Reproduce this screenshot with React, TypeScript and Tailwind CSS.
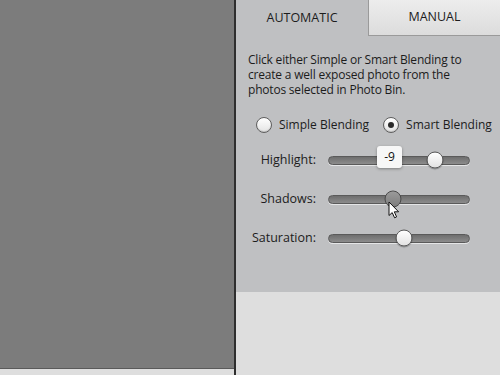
import React from "react";

const font = { fontFamily: '"Open Sans", "Liberation Sans", sans-serif' };

const Radio = ({ checked, label }: { checked?: boolean; label: string }) => (
  <label className="flex items-center gap-[7px]">
    <span className="w-[16px] h-[16px] rounded-full border border-[#5e5e5e] bg-gradient-to-b from-[#ffffff] to-[#e4e4e4] flex items-center justify-center shadow-[inset_0_-1px_1px_rgba(0,0,0,0.15)]">
      {checked && <span className="w-[6px] h-[6px] rounded-full bg-[#2a2a2a]" />}
    </span>
    <span className="text-[12px] text-[#1c1c1c] leading-none">{label}</span>
  </label>
);

const Slider = ({
  label,
  pos,
  pressed,
  tip,
}: {
  label: string;
  pos: number;
  pressed?: boolean;
  tip?: string;
}) => (
  <div className="flex items-center h-[20px]">
    <span className="w-[80px] text-right text-[12.5px] text-[#1c1c1c] leading-none">{label}</span>
    <div className="relative ml-[12px] w-[142px] h-[9px] rounded-full border border-[#5a5a5a] bg-gradient-to-b from-[#6e6e6e] to-[#8c8c8c] shadow-[0_1px_0_rgba(255,255,255,0.6)]">
      {tip && (
        <div
          className="absolute top-[-11px] w-[25px] h-[22px] rounded-[3px] bg-[#f7f7f7] shadow-[0_1px_3px_rgba(0,0,0,0.35)] flex items-center justify-center text-[12px] text-[#111] z-10"
          style={{ left: 48 }}
        >
          {tip}
        </div>
      )}
      <div
        className={
          pressed
            ? "absolute top-1/2 -translate-y-1/2 -translate-x-1/2 w-[17px] h-[17px] rounded-full border border-[#4a4a4a] bg-gradient-to-b from-[#9a9a9a] to-[#7e7e7e]"
            : "absolute top-1/2 -translate-y-1/2 -translate-x-1/2 w-[17px] h-[17px] rounded-full border border-[#5a5a5a] bg-gradient-to-b from-[#ffffff] to-[#e2e2e2] shadow-[0_1px_1px_rgba(0,0,0,0.3)]"
        }
        style={{ left: pos }}
      />
    </div>
  </div>
);

export default function App() {
  return (
    <div className="w-[500px] h-[375px] flex overflow-hidden" style={font}>
      {/* Preview area */}
      <div className="w-[234px] h-full flex flex-col">
        <div className="h-[369px] bg-[#7c7c7c] border-b border-[#5a5a5a]" />
        <div className="flex-1 bg-[#dedede]" />
      </div>
      <div className="w-[2px] h-full bg-[#2e2e2e]" />

      {/* Panel */}
      <div className="flex-1 flex flex-col">
        <div className="h-[292px] bg-[#bfc0c2] relative">
          <div className="flex h-[36px]">
            <div className="w-[132px] flex items-center justify-center text-[12.5px] text-[#1c1c1c]">
              AUTOMATIC
            </div>
            <div className="flex-1 flex items-center justify-center text-[12.5px] text-[#1c1c1c] bg-gradient-to-b from-[#ededed] to-[#dcdcdc] border-l border-b border-[#9a9a9a]">
              MANUAL
            </div>
          </div>

          <p className="mt-[16px] px-[12px] text-[12px] leading-[15px] tracking-[-0.2px] text-[#1c1c1c]">
            Click either Simple or Smart Blending to create a well exposed photo from the photos
            selected in Photo Bin.
          </p>

          <div className="mt-[20px] pl-[20px] flex items-center gap-[14px]">
            <Radio label="Simple Blending" />
            <Radio checked label="Smart Blending" />
          </div>

          <div className="mt-[17px] flex flex-col gap-[19px]">
            <Slider label="Highlight:" pos={106} tip="-9" />
            <Slider label="Shadows:" pos={64} pressed />
            <Slider label="Saturation:" pos={75} />
          </div>

          {/* mouse cursor */}
          <svg
            className="absolute"
            style={{ left: 152, top: 201 }}
            width="12"
            height="18"
            viewBox="0 0 12 18"
          >
            <path
              d="M1 1 L1 14.5 L4.2 11.6 L6.6 16.8 L8.6 15.9 L6.3 10.8 L10.6 10.8 Z"
              fill="#fff"
              stroke="#111"
              strokeWidth="1"
              strokeLinejoin="round"
            />
          </svg>
        </div>
        <div className="flex-1 bg-[#dedede]" />
      </div>
    </div>
  );
}
